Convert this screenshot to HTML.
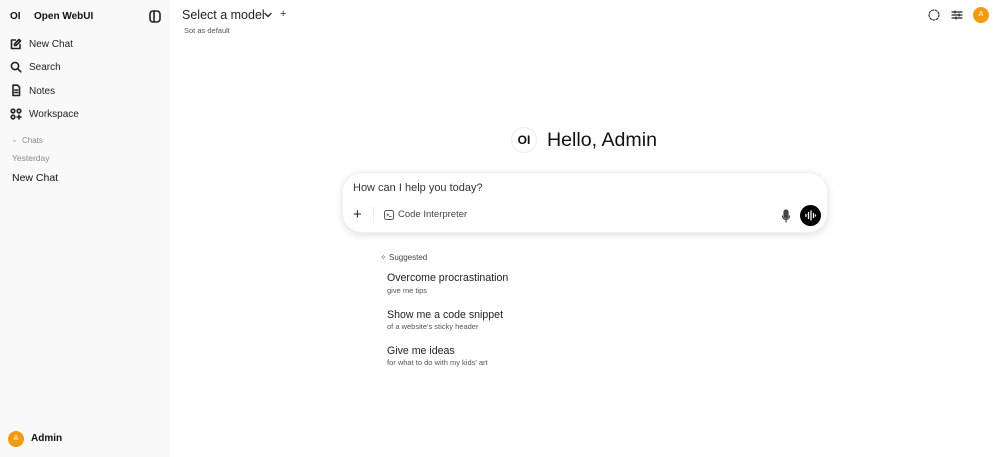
<!DOCTYPE html>
<html><head><meta charset="utf-8"><style>
*{box-sizing:border-box;margin:0;padding:0}
body{width:1000px;height:457px;overflow:hidden;font-family:"Liberation Sans",sans-serif;background:#fff;color:#111;position:relative}
.sb{position:absolute;left:0;top:0;width:170px;height:457px;background:#f9f9f9}
.a{position:absolute;white-space:nowrap}
svg{position:absolute;fill:none;stroke:#222;stroke-width:1.6;stroke-linecap:round;stroke-linejoin:round}
.nav{font-size:10px;color:#222}
</style></head><body>
<div class="sb">
  <div class="a" style="left:10px;top:11px;font-size:10px;font-weight:bold">OI</div>
  <div class="a" style="left:34px;top:11px;font-size:10px;font-weight:bold">Open WebUI</div>
  <svg style="left:149px;top:10px" width="12" height="13" viewBox="0 0 12 13"><rect x="1" y="1" width="10" height="11" rx="3"/><line x1="5" y1="1.5" x2="5" y2="11.5"/></svg>
  <svg style="left:10px;top:38px" width="12" height="12" viewBox="0 0 12 12"><path d="M10 6.5V10.5H1.5V2H5.5"/><path d="M9 1.5L10.5 3 6 7.5H4.5V6Z"/></svg>
  <div class="a nav" style="left:29px;top:39px">New Chat</div>
  <svg style="left:10px;top:61px" width="12" height="12" viewBox="0 0 12 12"><circle cx="5" cy="5" r="3.6"/><line x1="7.7" y1="7.7" x2="10.8" y2="10.8"/></svg>
  <div class="a nav" style="left:29px;top:62px">Search</div>
  <svg style="left:10px;top:84px" width="12" height="13" viewBox="0 0 12 13"><path d="M3 1.2H7.5L9.5 3.2V11.5H3Z"/><line x1="4.8" y1="6" x2="7.6" y2="6"/><line x1="4.8" y1="8.5" x2="7.6" y2="8.5"/></svg>
  <div class="a nav" style="left:29px;top:86px">Notes</div>
  <svg style="left:10px;top:108px" width="12" height="12" viewBox="0 0 12 12"><circle cx="3" cy="3" r="1.8"/><circle cx="9" cy="3" r="1.8"/><circle cx="3" cy="9" r="1.8"/><path d="M9 7V11M7 9H11"/></svg>
  <div class="a nav" style="left:29px;top:109px">Workspace</div>
  <div class="a" style="left:11px;top:135px;font-size:8px;color:#aaa">⌄</div>
  <div class="a" style="left:22px;top:136px;font-size:8px;color:#888">Chats</div>
  <div class="a" style="left:12px;top:153px;font-size:8.5px;color:#888">Yesterday</div>
  <div class="a" style="left:12px;top:172px;font-size:10.5px;color:#111">New Chat</div>
  <div class="a" style="left:8px;top:431px;width:16px;height:16px;border-radius:50%;background:#f29a12;color:#fff;font-size:7px;text-align:center;line-height:16px">A</div>
  <div class="a" style="left:31px;top:433px;font-size:10px;font-weight:bold">Admin</div>
</div>
<div class="a" style="left:182px;top:8px;font-size:12.5px;color:#222">Select a model</div>
<svg style="left:264px;top:12px;stroke-width:1.3" width="8" height="6" viewBox="0 0 8 6"><path d="M1 1.5L4 4.5 7 1.5"/></svg>
<div class="a" style="left:280px;top:8px;font-size:11px;color:#333">+</div>
<div class="a" style="left:184px;top:26px;font-size:7.5px;color:#555">Sot as default</div>
<svg style="left:928px;top:9px;stroke-width:1.1;stroke-dasharray:2 1.5" width="12" height="12" viewBox="0 0 12 12"><circle cx="6" cy="6" r="5"/></svg>
<svg style="left:951px;top:9px;stroke-width:1.2" width="12" height="12" viewBox="0 0 12 12"><path d="M1 3H11M1 6H11M1 9H11"/><path d="M4 2V4M8 5V7M5 8V10"/></svg>
<div class="a" style="left:973px;top:7px;width:16px;height:16px;border-radius:50%;background:#f29a12;color:#fff;font-size:7px;text-align:center;line-height:16px">A</div>
<div class="a" style="left:511px;top:127px;width:26px;height:26px;border-radius:50%;border:1px solid #eee;font-size:12px;font-weight:bold;text-align:center;line-height:24px">OI</div>
<div class="a" style="left:547px;top:129px;font-size:19.6px;color:#111">Hello, Admin</div>
<div class="a" style="left:342px;top:172px;width:486px;height:61px;border-radius:20px;background:#fff;box-shadow:0 2px 8px rgba(0,0,0,.13);border:1px solid #f0f0f0"></div>
<div class="a" style="left:353px;top:182px;font-size:11px;color:#333">How can I help you today?</div>
<div class="a" style="left:353px;top:206px;font-size:15px;color:#222">+</div>
<div class="a" style="left:373px;top:207px;width:1px;height:16px;background:#eee"></div>
<svg style="left:384px;top:210px;stroke-width:1;stroke:#555" width="10" height="10" viewBox="0 0 10 10"><rect x=".5" y=".5" width="9" height="9" rx="2"/><path d="M3 4L4.5 5 3 6M5.5 6.5H7"/></svg>
<div class="a" style="left:398px;top:209px;font-size:9.5px;color:#444">Code Interpreter</div>
<svg style="left:781px;top:209px;stroke-width:1.2;stroke:#444" width="10" height="14" viewBox="0 0 10 14"><rect x="3" y="1" width="4" height="8" rx="2" fill="#444"/><path d="M1.5 7A3.5 3.5 0 0 0 8.5 7M5 10.5V13"/></svg>
<div class="a" style="left:800px;top:205px;width:21px;height:21px;border-radius:50%;background:#000"></div>
<svg style="left:804px;top:209px;stroke:#fff;stroke-width:1.3" width="13" height="13" viewBox="0 0 13 13"><path d="M2 5.5V7.5M4.5 3.5V9.5M7 2V11M9.5 4.5V8.5M11.5 6V7"/></svg>
<div class="a" style="left:380px;top:253px;font-size:8px;color:#666">✧</div>
<div class="a" style="left:389px;top:253px;font-size:8px;color:#444">Suggested</div>
<div class="a" style="left:387px;top:272px;font-size:10.6px;color:#222">Overcome procrastination</div>
<div class="a" style="left:387px;top:286px;font-size:7.5px;color:#555">give me tips</div>
<div class="a" style="left:387px;top:309px;font-size:10.6px;color:#222">Show me a code snippet</div>
<div class="a" style="left:387px;top:322px;font-size:7.5px;color:#555">of a website's sticky header</div>
<div class="a" style="left:387px;top:345px;font-size:10.6px;color:#222">Give me ideas</div>
<div class="a" style="left:387px;top:358px;font-size:7.5px;color:#555">for what to do with my kids' art</div>
</body></html>
